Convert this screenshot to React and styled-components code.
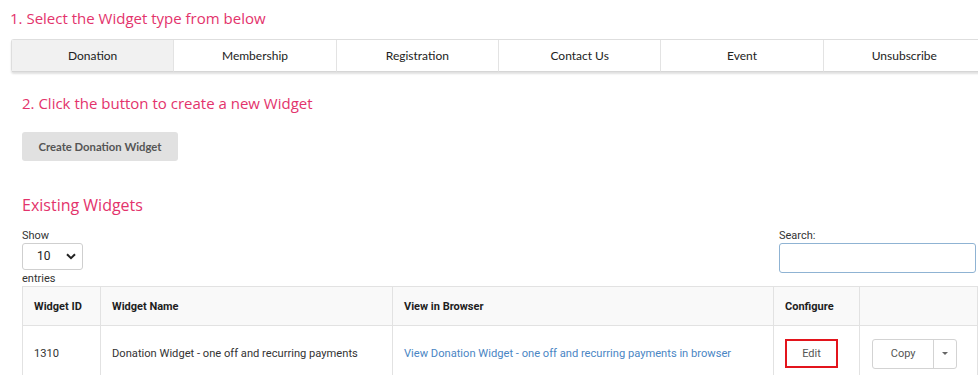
import React from 'react';
import styled, { createGlobalStyle } from 'styled-components';

const GlobalStyle = createGlobalStyle`
    html, body {
        margin: 0;
        padding: 0;
        background: #ffffff;
        overflow: hidden;
    }
    * {
        box-sizing: border-box;
    }
`;

const Page = styled.div`
    width: 978px;
    height: 375px;
    overflow: hidden;
    font-family: Roboto, "Liberation Sans", sans-serif;
    color: #333;
`;

const StepTitle = styled.h3`
    margin: 0;
    font-family: "Open Sans", sans-serif;
    font-weight: 400;
    font-size: ${({size}) => size || 15}px;
    line-height: 20px;
    color: #e3336c;
    padding-left: ${({indent}) => indent}px;
`;

const TabBar = styled.div`
    display: flex;
    width: 975px;
    margin: 11px 0 0 11px;
    border-top: 1px solid #dedede;
    border-left: 1px solid #dedede;
    border-radius: 3px 0 0 3px;
    box-shadow: 0 2px 2px rgba(0, 0, 0, 0.12);
`;

const Tab = styled.div`
    flex: 1;
    height: 32px;
    display: flex;
    align-items: center;
    justify-content: center;
    font-family: Lato, sans-serif;
    font-size: 12px;
    color: #222;
    background: ${({active}) => (active ? '#f1f1f1' : '#ffffff')};
    border-right: 1px solid #e3e3e3;
    border-bottom: 1px solid #d6d6d6;
`;

const Section = styled.div`
    padding-left: 22px;
`;

const CreateButton = styled.button`
    width: 156px;
    height: 29px;
    margin-top: 19px;
    border: none;
    border-radius: 3px;
    background: #e1e1e1;
    font-family: Lato, sans-serif;
    font-weight: 700;
    font-size: 11.3px;
    color: #555;
    padding: 0;
`;

const Controls = styled.div`
    display: flex;
    justify-content: space-between;
    align-items: flex-start;
    margin-top: 14px;
    font-size: 11px;
    color: #333;
`;

const LengthBox = styled.div`
    display: flex;
    flex-direction: column;
    line-height: 13px;
`;

const Select = styled.div`
    width: 61px;
    height: 27px;
    margin: 1px 0 2px;
    border: 1px solid #cfcfcf;
    border-radius: 3px;
    display: flex;
    align-items: center;
    justify-content: space-between;
    padding: 0 6px 0 14px;
    font-size: 12px;
    color: #222;
`;

const SearchBox = styled.div`
    display: flex;
    flex-direction: column;
    line-height: 13px;
    margin-right: 2px;
`;

const SearchInput = styled.div`
    width: 197px;
    height: 30px;
    margin-top: 1px;
    border: 1px solid #8fb3d3;
    border-radius: 3px;
`;

const Table = styled.table`
    width: 956px;
    margin-top: 1px;
    border-collapse: collapse;
    table-layout: fixed;
    font-size: 11.15px;
    border: 1px solid #e2e2e2;
`;

const HeadCell = styled.th`
    height: 39px;
    padding: 0 11px;
    text-align: left;
    font-weight: 700;
    font-size: 11px;
    color: #1e1e1e;
    background: #f9f9f9;
    border: 1px solid #e2e2e2;
`;

const Cell = styled.td`
    height: 56px;
    padding: 0 11px;
    color: #333;
    border: 1px solid #e2e2e2;
    vertical-align: middle;
`;

const Link = styled.a`
    color: #4a86c4;
    text-decoration: none;
`;

const EditButton = styled.div`
    width: 53px;
    height: 29px;
    display: flex;
    align-items: center;
    justify-content: center;
    border: 2px solid #e3141c;
    color: #555;
    font-size: 11px;
`;

const SplitButton = styled.div`
    display: flex;
    width: 85px;
    height: 30px;
    margin-left: 1px;
    border: 1px solid #d3d3d3;
    border-radius: 3px;
    color: #555;
    font-size: 11px;
`;

const SplitPart = styled.div`
    display: flex;
    align-items: center;
    justify-content: center;
    width: ${({w}) => w}px;
    border-left: ${({divider}) => (divider ? '1px solid #d3d3d3' : 'none')};
`;

const Caret = styled.span`
    width: 0;
    height: 0;
    border-left: 3px solid transparent;
    border-right: 3px solid transparent;
    border-top: 3px solid #666;
`;

const tabs = ['Donation', 'Membership', 'Registration', 'Contact Us', 'Event', 'Unsubscribe'];

const Chevron = () => (
    <svg width="10" height="7" viewBox="0 0 10 7">
        <path d="M1 1.2 L5 5.2 L9 1.2" fill="none" stroke="#222" strokeWidth="2" />
    </svg>
);

const App = () => {
    return (
        <Page>
            <GlobalStyle />
            <StepTitle indent={10} style={{paddingTop: 8}}>1. Select the Widget type from below</StepTitle>
            <TabBar>
                {tabs.map((t, i) => (
                    <Tab key={t} active={i === 0}>{t}</Tab>
                ))}
            </TabBar>
            <Section>
                <StepTitle style={{marginTop: 21}}>2. Click the button to create a new Widget</StepTitle>
                <CreateButton>Create Donation Widget</CreateButton>
                <StepTitle size={16} style={{marginTop: 34}}>Existing Widgets</StepTitle>
                <Controls>
                    <LengthBox>
                        <span>Show</span>
                        <Select>
                            <span>10</span>
                            <Chevron />
                        </Select>
                        <span>entries</span>
                    </LengthBox>
                    <SearchBox>
                        <span>Search:</span>
                        <SearchInput />
                    </SearchBox>
                </Controls>
                <Table>
                    <colgroup>
                        <col style={{width: 78}} />
                        <col style={{width: 292}} />
                        <col style={{width: 381}} />
                        <col style={{width: 86}} />
                        <col />
                    </colgroup>
                    <thead>
                        <tr>
                            <HeadCell>Widget ID</HeadCell>
                            <HeadCell>Widget Name</HeadCell>
                            <HeadCell>View in Browser</HeadCell>
                            <HeadCell>Configure</HeadCell>
                            <HeadCell />
                        </tr>
                    </thead>
                    <tbody>
                        <tr>
                            <Cell>1310</Cell>
                            <Cell>Donation Widget - one off and recurring payments</Cell>
                            <Cell>
                                <Link>View Donation Widget - one off and recurring payments in browser</Link>
                            </Cell>
                            <Cell>
                                <EditButton>Edit</EditButton>
                            </Cell>
                            <Cell>
                                <SplitButton>
                                    <SplitPart w={61}>Copy</SplitPart>
                                    <SplitPart w={23} divider><Caret /></SplitPart>
                                </SplitButton>
                            </Cell>
                        </tr>
                    </tbody>
                </Table>
            </Section>
        </Page>
    );
};

export default App;
